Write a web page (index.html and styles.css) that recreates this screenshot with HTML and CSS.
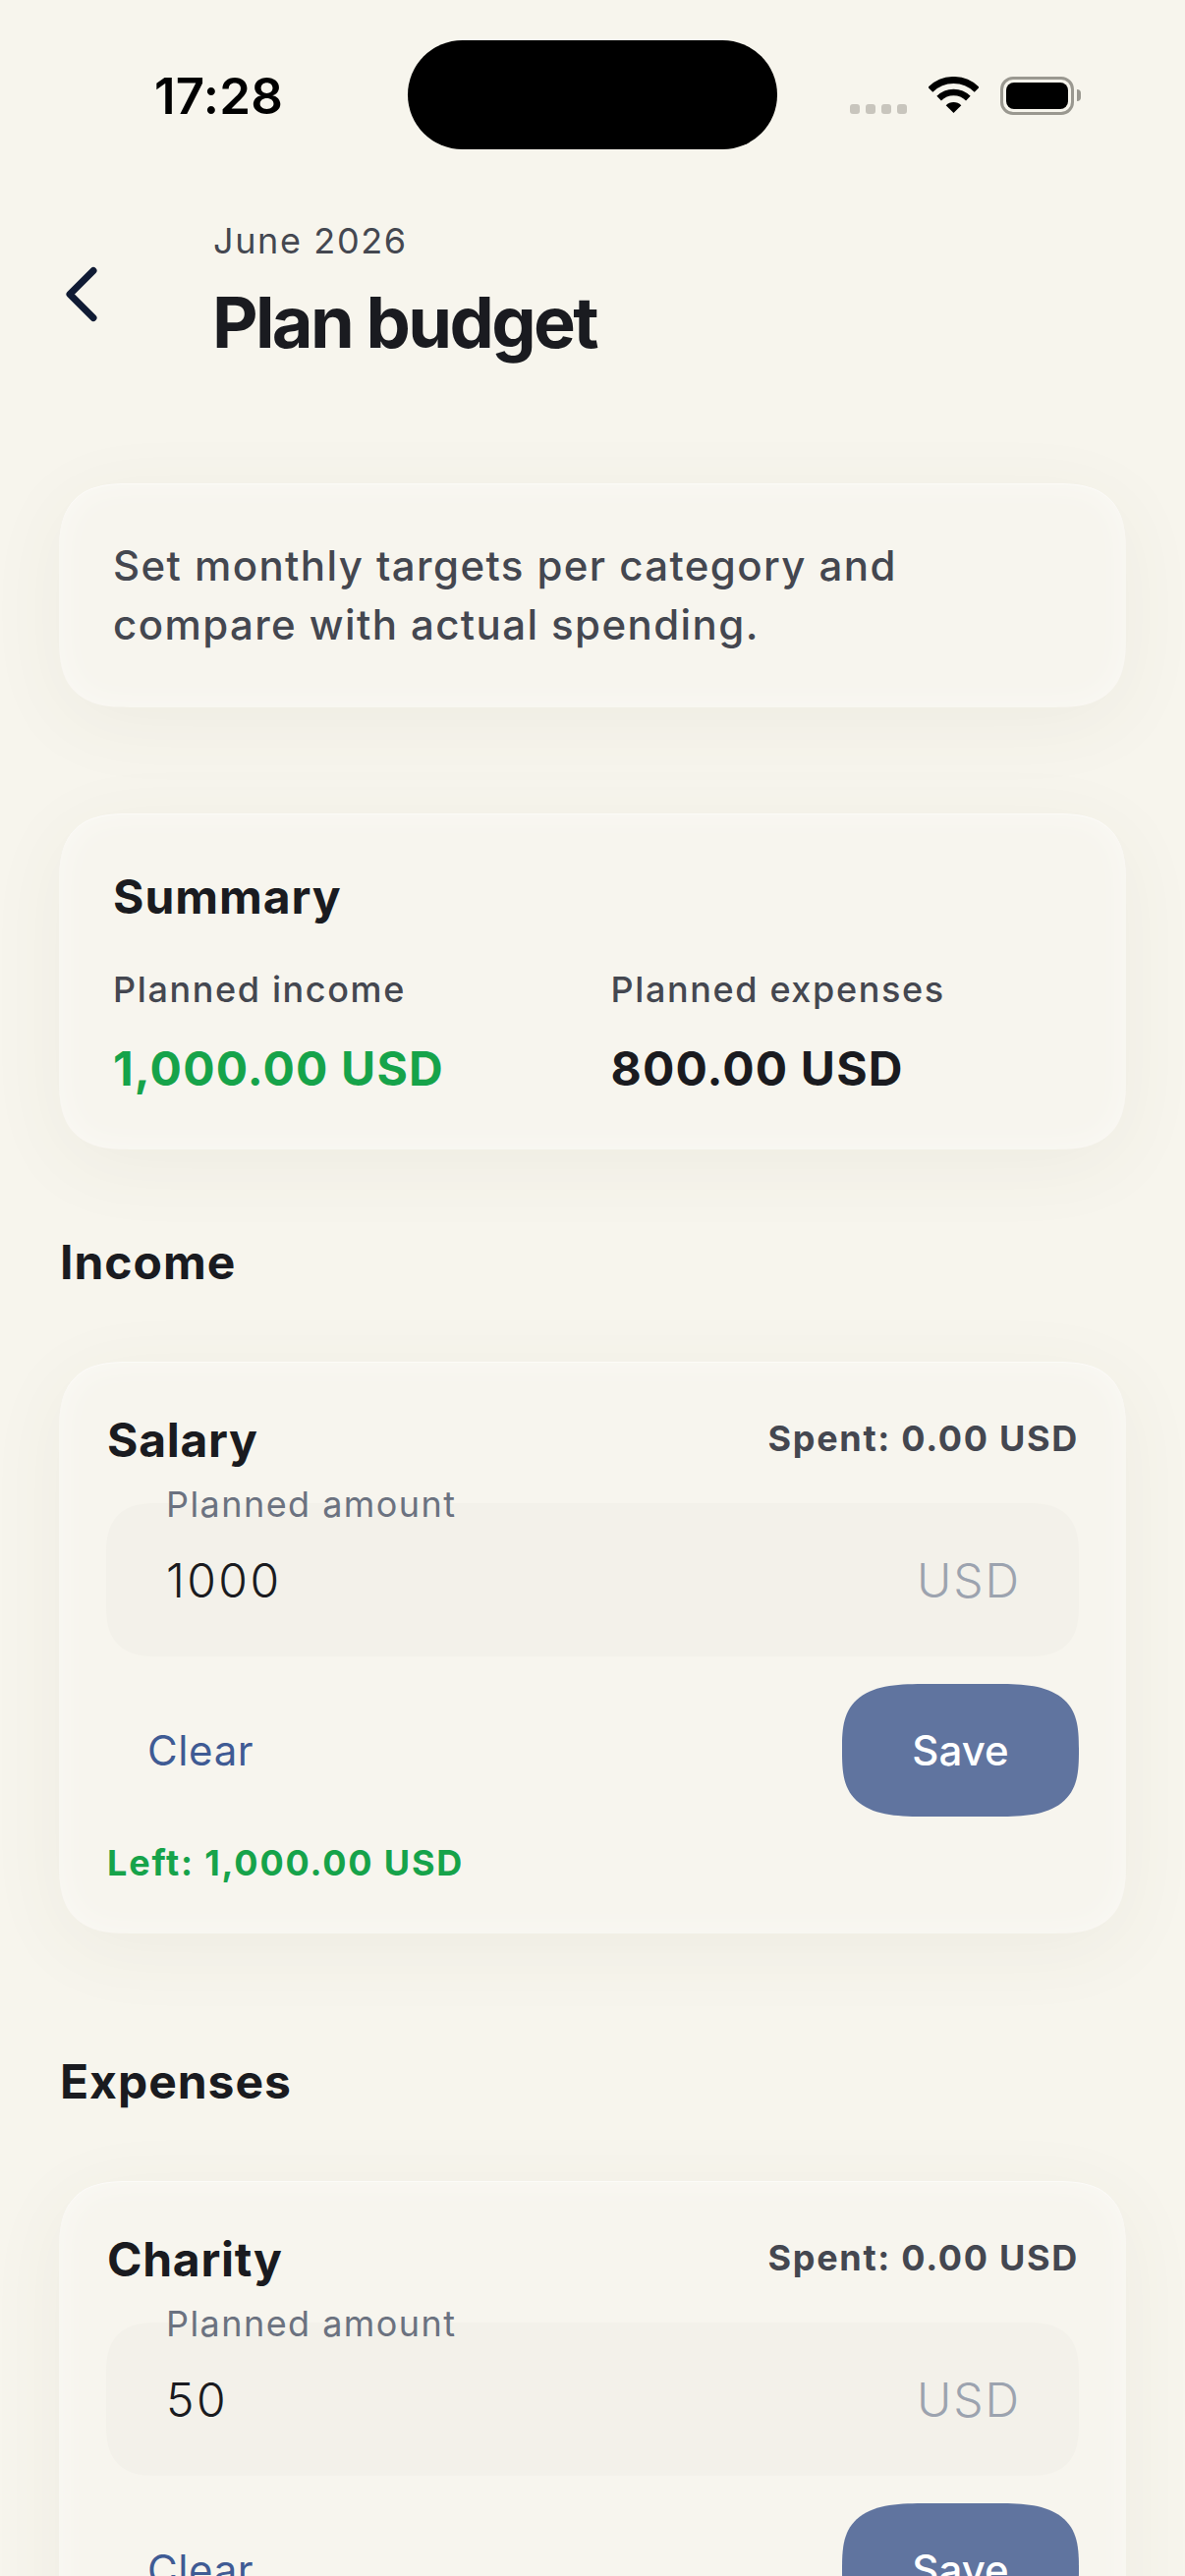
FILE: index.html
```html
<!DOCTYPE html>
<html lang="en">
<head>
  <meta charset="UTF-8" />
  <title>Plan budget</title>
  <link rel="stylesheet" href="styles.css">
</head>
<body>
  <div class="status-bar">
    <div class="time">17:28</div>
    <div class="island"></div>
    <div class="status-icons">
      <div class="signal"><i></i><i></i><i></i><i></i></div>
      <svg class="wifi" width="51" height="37" viewBox="0 0 51 37">
        <path d="M1.8 13.3A33.5 33.5 0 0 1 49.2 13.3" fill="none" stroke="#000" stroke-width="7" />
        <path d="M10.65 22.15A21 21 0 0 1 40.35 22.15" fill="none" stroke="#000" stroke-width="6.5" />
        <path d="M25.5 37L17.7 29.2A11 11 0 0 1 33.3 29.2Z" fill="#000" />
      </svg>
      <div class="battery"><div class="battery-fill"></div></div>
      <div class="battery-nub"></div>
    </div>
  </div>

  <div class="page">
    <div class="header">
      <svg class="back" width="48" height="64" viewBox="0 0 48 64">
        <path d="M35 10.500L11 34.500L35 58.500" fill="none" stroke="#101b34" stroke-width="7" stroke-linecap="round" stroke-linejoin="round" />
      </svg>
      <div>
        <div class="month">June 2026</div>
        <h1>Plan budget</h1>
      </div>
    </div>

    <div class="card intro">Set monthly targets per category and compare with actual spending.</div>

    <div class="card summary">
      <h2>Summary</h2>
      <div class="summary-grid">
        <div>
          <div class="summary-label">Planned income</div>
          <div class="summary-value green">1,000.00 USD</div>
        </div>
        <div>
          <div class="summary-label">Planned expenses</div>
          <div class="summary-value">800.00 USD</div>
        </div>
      </div>
    </div>

    <h2 class="section">Income</h2>

    <div class="card budget">
      <div class="budget-top">
        <div class="budget-name">Salary</div>
        <div class="spent">Spent: 0.00 USD</div>
      </div>
      <div class="field">
        <span class="field-label">Planned amount</span>
        <span class="field-value">1000</span>
        <span class="field-unit">USD</span>
      </div>
      <div class="actions">
        <div class="clear">Clear</div>
        <div class="save">Save</div>
      </div>
      <div class="left green">Left: 1,000.00 USD</div>
    </div>

    <h2 class="section expenses">Expenses</h2>

    <div class="card budget">
      <div class="budget-top">
        <div class="budget-name">Charity</div>
        <div class="spent">Spent: 0.00 USD</div>
      </div>
      <div class="field">
        <span class="field-label">Planned amount</span>
        <span class="field-value">50</span>
        <span class="field-unit">USD</span>
      </div>
      <div class="actions">
        <div class="clear">Clear</div>
        <div class="save">Save</div>
      </div>
    </div>
  </div>
</body>
</html>
```

FILE: styles.css
```css
html, body {
  margin: 0; padding: 0;
  height: 2622px;
  overflow: hidden;
  background: #f7f5ed;
  color: #1a1b20;
  font-family: "Inter", sans-serif;
}

.status-bar {
  display: grid;
  grid-template-columns: 415px 376px 1fr;
  height: 152px;
  padding-top: 41px;
  box-sizing: border-box;
}

.time {
  padding-left: 157px;
  font-size: 51px;
  font-weight: 600;
  line-height: 113px;
  letter-spacing: 0.005em;
  color: #000;
}

.island {
  height: 111px;
  background: #000;
  border-radius: 56px;
}

.status-icons {
  display: flex;
  align-items: flex-start;
  padding: 37px 0 0 74px;
}

.signal {
  display: flex;
  gap: 6px;
  margin-top: 28px;
}

.signal i {
  width: 10px;
  height: 10px;
  border-radius: 3px;
  background: #c8c5bd;
}

.wifi { margin-left: 22px; }

.battery {
  box-sizing: border-box;
  width: 75px;
  height: 39px;
  margin-left: 22px;
  padding: 3px;
  border: 3px solid #9a9890;
  border-radius: 13px;
}

.battery-fill {
  height: 100%;
  background: #000;
  border-radius: 8px;
}

.battery-nub {
  width: 4px;
  height: 12px;
  margin: 13px 0 0 3px;
  background: #9a9890;
  border-radius: 0 6px 6px 0;
}

.page { padding: 0 60px; }

.header {
  display: flex;
  align-items: center;
  gap: 109px;
  padding-top: 69px;
  margin-bottom: 119px;
}

.month {
  font-size: 36px;
  line-height: 48px;
  letter-spacing: 0.045em;
  color: #444750;
  margin-bottom: 14px;
}

h1 {
  margin: 0 0 0 -1px;
  font-size: 72px;
  font-weight: 700;
  line-height: 90px;
  letter-spacing: -0.037em;
}

.card {
  box-sizing: border-box;
  background: #f7f5ee;
  border-radius: 72px;
  corner-shape: superellipse(1.45);
  box-shadow: 0 16px 80px rgba(90, 80, 50, 0.06), inset 0 0 36px rgba(255, 255, 255, 0.45), inset 0 1px 0 rgba(255, 255, 255, 0.5);
}

.intro {
  height: 228px;
  padding: 54px 55px;
  margin-bottom: 108px;
  font-size: 42px;
  font-weight: 500;
  line-height: 60px;
  letter-spacing: 0.0335em;
  color: #444750;
}

.summary {
  height: 342px;
  padding: 54px 55px;
}

h2 {
  margin: 0;
  font-size: 48px;
  font-weight: 700;
  line-height: 62px;
  letter-spacing: 0.02em;
}

.summary-grid {
  display: grid;
  grid-template-columns: 1fr 1fr;
  gap: 37px;
  margin-top: 38px;
}

.summary-label {
  font-size: 36px;
  font-weight: 500;
  line-height: 50px;
  letter-spacing: 0.045em;
  color: #444750;
}

.summary-value {
  margin-top: 26px;
  font-size: 48px;
  font-weight: 700;
  line-height: 60px;
  letter-spacing: 0.024em;
}

.green { color: #16a34a; }

.section { margin: 84px 0 70px 1px; }

.section.expenses { margin-top: 120px; }

.budget {
  height: 582px;
  padding: 48px;
}

.budget-top {
  display: flex;
  justify-content: space-between;
  align-items: center;
  height: 62px;
  padding: 0 0 0 1px;
}

.budget-name {
  font-size: 48px;
  font-weight: 700;
  letter-spacing: 0.015em;
}

.spent {
  margin-top: -2px;
  font-size: 36px;
  font-weight: 700;
  letter-spacing: 0.047em;
  color: #444750;
}

.field {
  position: relative;
  display: flex;
  justify-content: space-between;
  align-items: center;
  height: 156px;
  margin-top: 34px;
  padding: 0 59px 0 61px;
  background: #f3f1ea;
  border-radius: 54px;
  corner-shape: superellipse(1.45);
}

.field-label {
  position: absolute;
  left: 61px;
  top: -24px;
  font-size: 36px;
  line-height: 50px;
  letter-spacing: 0.04em;
  color: #6b7280;
}

.field-value {
  font-size: 48px;
  font-weight: 300;
  letter-spacing: 0.05em;
}

.field-unit {
  font-size: 48px;
  font-weight: 300;
  letter-spacing: 0.04em;
  color: #9ca3af;
}

.actions {
  display: flex;
  justify-content: space-between;
  align-items: center;
  margin-top: 28px;
}

.clear {
  padding-left: 42px;
  font-size: 42px;
  letter-spacing: 0.015em;
  color: #3f5b94;
}

.save {
  width: 241px;
  height: 135px;
  background: #60749f;
  border-radius: 87px / 67.5px;
  corner-shape: superellipse(1.6);
  color: #fff;
  font-size: 42px;
  font-weight: 500;
  line-height: 135px;
  text-align: center;
}

.left {
  margin-top: 27px;
  padding-left: 1px;
  font-size: 36px;
  font-weight: 700;
  line-height: 40px;
  letter-spacing: 0.05em;
}
```
